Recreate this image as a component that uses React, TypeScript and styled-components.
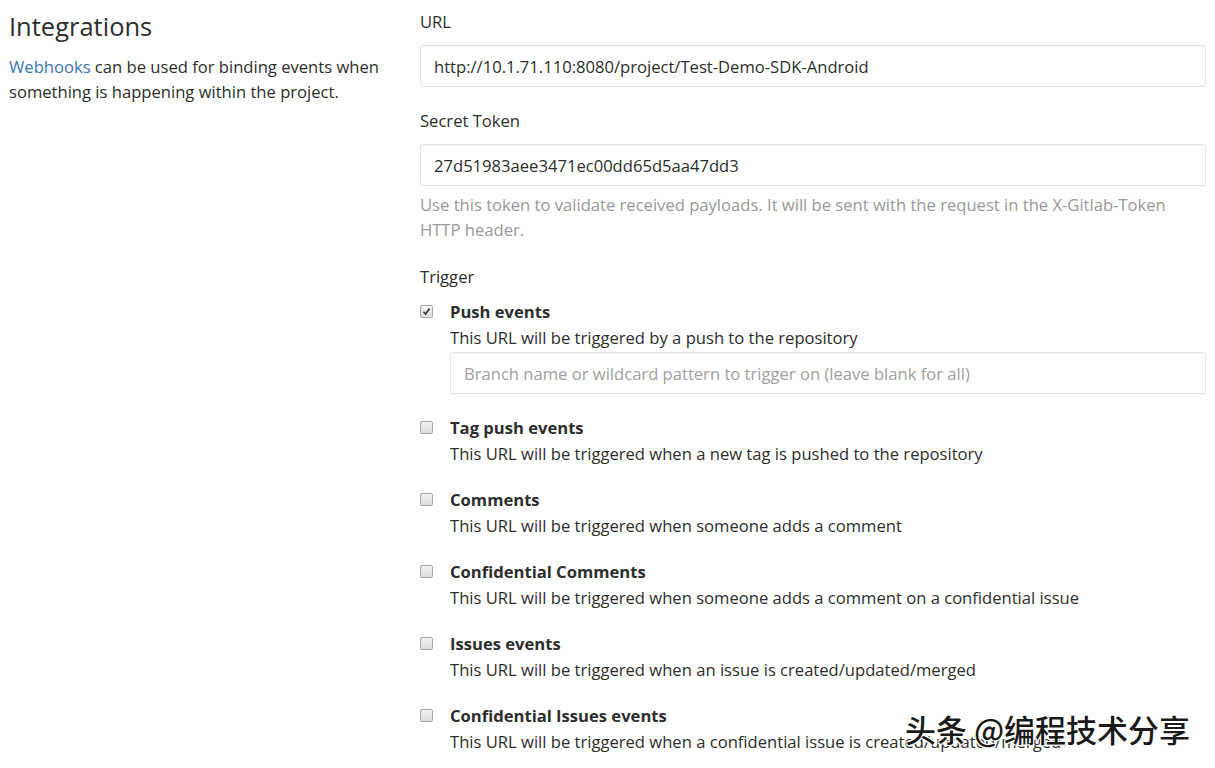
import React from "react";
import styled, { createGlobalStyle } from "styled-components";

const Global = createGlobalStyle`
  html, body { margin: 0; padding: 0; background: #fff; }
  body { font-family: "Open Sans", "Noto Sans", "Liberation Sans", sans-serif; color: #2e2e2e; }
  * { box-sizing: border-box; }
`;

const Page = styled.div`
  position: relative;
  width: 1215px;
  height: 768px;
  overflow: hidden;
  display: grid;
  grid-template-columns: 420px 786px;
  font-size: 16.6px;
  line-height: 25px;
`;

const Side = styled.div`
  padding: 9px 0 0 9px;
`;

const Title = styled.h3`
  margin: 0 0 11px;
  font-size: 25.5px;
  line-height: 34px;
  font-weight: 400;
  color: #2e2e2e;
`;

const SideText = styled.p`
  margin: 0;
  width: 390px;
  color: #2e2e2e;
`;

const Link = styled.a`
  color: #3777b0;
  text-decoration: none;
`;

const Main = styled.div`
  padding-top: 9px;
  display: flex;
  flex-direction: column;
`;

const Group = styled.div<{ $gap?: number }>`
  margin-bottom: ${(p) => p.$gap ?? 21}px;
`;

const Label = styled.div<{ $mb?: number }>`
  font-weight: 500;
  margin-bottom: ${(p) => p.$mb ?? 11}px;
`;

const Input = styled.div<{ $placeholder?: boolean }>`
  height: 42px;
  border: 1px solid #e5e5e5;
  border-radius: 3px;
  padding: 0 13px;
  display: flex;
  align-items: center;
  color: ${(p) => (p.$placeholder ? "#a0a0a0" : "#2e2e2e")};
  box-shadow: inset 0 1px 2px rgba(0, 0, 0, 0.04);
`;

const Help = styled.div`
  margin-top: 6px;
  color: #9a9a9a;
`;

const Check = styled.div`
  display: grid;
  grid-template-columns: 30px 1fr;
  margin-bottom: 21px;
`;

const Box = styled.span<{ $checked?: boolean }>`
  margin-top: 6px;
  width: 13px;
  height: 13px;
  border: 1px solid #a9a9a9;
  border-radius: 2px;
  background: linear-gradient(#f4f4f4, #dcdcdc);
  display: flex;
  align-items: center;
  justify-content: center;
`;

const CheckTitle = styled.div`
  font-weight: 700;
  color: #2e2e2e;
`;

const CheckDesc = styled.div`
  margin-top: 1px;
  color: #2e2e2e;
`;

const SubInput = styled(Input)`
  margin-top: 2px;
`;

const Watermark = styled.div`
  position: absolute;
  left: 905px;
  top: 708px;
  font-family: "Noto Sans CJK SC", sans-serif;
  font-size: 31px;
  line-height: 42px;
  font-weight: 500;
  color: #1a1a1a;
  text-shadow: 1px 1px 0 #fff, -1px -1px 0 #fff, 1px -1px 0 #fff, -1px 1px 0 #fff;
`;

const triggers = [
  { t: "Push events", d: "This URL will be triggered by a push to the repository", checked: true, input: true },
  { t: "Tag push events", d: "This URL will be triggered when a new tag is pushed to the repository" },
  { t: "Comments", d: "This URL will be triggered when someone adds a comment" },
  { t: "Confidential Comments", d: "This URL will be triggered when someone adds a comment on a confidential issue" },
  { t: "Issues events", d: "This URL will be triggered when an issue is created/updated/merged" },
  { t: "Confidential Issues events", d: "This URL will be triggered when a confidential issue is created/updated/merged" },
];

export default function App() {
  return (
    <Page>
      <Global />
      <Side>
        <Title>Integrations</Title>
        <SideText>
          <Link href="#">Webhooks</Link> can be used for binding events when something is happening within the project.
        </SideText>
      </Side>
      <Main>
        <Group>
          <Label>URL</Label>
          <Input>http://10.1.71.110:8080/project/Test-Demo-SDK-Android</Input>
        </Group>
        <Group $gap={22}>
          <Label>Secret Token</Label>
          <Input>27d51983aee3471ec00dd65d5aa47dd3</Input>
          <Help>
            Use this token to validate received payloads. It will be sent with the request in the X-Gitlab-Token HTTP header.
          </Help>
        </Group>
        <Label $mb={10}>Trigger</Label>
        {triggers.map((x) => (
          <Check key={x.t}>
            <Box $checked={x.checked}>
              {x.checked && (
                <svg width="9" height="9" viewBox="0 0 9 9">
                  <path d="M1.5 4.8 L3.6 7 L7.6 1.6" fill="none" stroke="#333" strokeWidth="1.6" />
                </svg>
              )}
            </Box>
            <div>
              <CheckTitle>{x.t}</CheckTitle>
              <CheckDesc>{x.d}</CheckDesc>
              {x.input && <SubInput $placeholder>Branch name or wildcard pattern to trigger on (leave blank for all)</SubInput>}
            </div>
          </Check>
        ))}
      </Main>
      <Watermark>头条 @编程技术分享</Watermark>
    </Page>
  );
}
